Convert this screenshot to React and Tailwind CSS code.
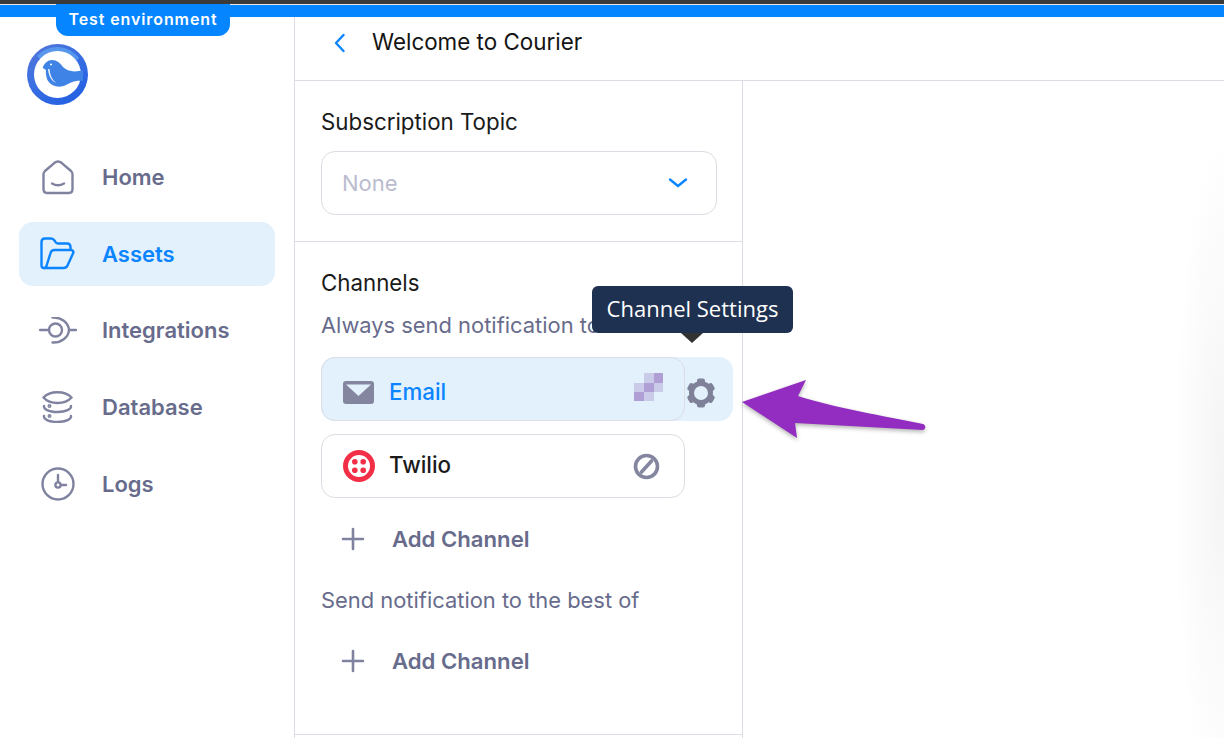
import React from "react";

const navIcon = "fill-none stroke-[#8083a0] stroke-[2.4]";

function HomeIcon() {
  return (
    <svg width="32" height="35" viewBox="0 0 32 35" className={navIcon} strokeLinecap="round" strokeLinejoin="round">
      <path d="M1.5 14 C1.5 12.8 2 12 3 11 L12.5 2.8 C14.5 1.2 17.5 1.2 19.5 2.8 L29 11 C30 12 30.5 12.8 30.5 14 V29 C30.5 31.5 29 33 27 33 H5 C3 33 1.5 31.5 1.5 29 Z" />
      <path d="M10 23.5 C13.5 25.5 18.5 25.5 22 23.5" />
    </svg>
  );
}

function FolderIcon() {
  return (
    <svg width="35" height="33" viewBox="0 0 35 33" className="fill-none stroke-[#0a84ff] stroke-[2.4]" strokeLinecap="round" strokeLinejoin="round">
      <path d="M4 31 C2.5 31 1.5 29.8 1.5 28.5 V5 C1.5 3 3 1.5 5 1.5 H11 C12.5 1.5 13.5 2 14.5 3.5 L15.5 5 C16 6 17 6.5 18 6.5 H27 C29 6.5 30.5 8 30.5 10 V12.5" />
      <path d="M4 31 C5.5 31 6 30 6.5 29 L10.5 16 C11 14 12.5 13 14.5 13 H31 C33 13 34 15 33 16.5 L27.5 28.5 C26.7 30.2 25.5 31 23.5 31 H4 Z" />
    </svg>
  );
}

function IntegrationsIcon() {
  return (
    <svg width="38" height="28" viewBox="0 0 38 28" className={navIcon} strokeLinecap="round">
      <path d="M1 13 H10" />
      <circle cx="16.5" cy="13" r="6.5" />
      <path d="M13.5 0.5 C22 0 29.5 5.5 30 13 C29.5 20.5 22 26 13.5 25.5" />
      <path d="M30 13 H37" />
    </svg>
  );
}

function DatabaseIcon() {
  return (
    <svg width="31" height="32" viewBox="0 0 31 32" className={navIcon} strokeLinecap="round">
      <path d="M1.5 6.5 C5 2.5 10 1.2 15.5 1.2 C21 1.2 26 2.5 29.5 6.5 C26 10.5 21 12 15.5 12 C10 12 5 10.5 1.5 6.5 Z" />
      <path d="M2 15 C1.5 18 6 20.8 15.5 21 C24 20.8 29.5 18 29 15" />
      <path d="M2 25 C1.5 28 6 30.8 15.5 31 C24 30.8 29.5 28 29 25" />
      <circle cx="7.5" cy="15" r="0.8" />
      <circle cx="7.5" cy="25" r="0.8" />
    </svg>
  );
}

function LogsIcon() {
  return (
    <svg width="34" height="34" viewBox="0 0 34 34" className={navIcon} strokeLinecap="round">
      <circle cx="17" cy="17" r="15.5" />
      <path d="M17 8 V15" />
      <circle cx="17" cy="18" r="2.6" />
      <path d="M20 18 H25" />
    </svg>
  );
}

function CourierLogo() {
  return (
    <svg width="61" height="61" viewBox="0 0 61 61">
      <defs>
        <linearGradient id="ring" x1="0" y1="0" x2="0.7" y2="1">
          <stop offset="0" stopColor="#5676d8" />
          <stop offset="0.5" stopColor="#3a6fe2" />
          <stop offset="1" stopColor="#2460e2" />
        </linearGradient>
      </defs>
      <circle cx="30.5" cy="30.5" r="30.5" fill="url(#ring)" />
      <path d="M10 12 A27 27 0 0 1 52 14 L47 19 A23 23 0 0 0 15 17 Z" fill="#5fa6f2" opacity="0.7" />
      <circle cx="30.5" cy="30.5" r="23.5" fill="#fff" />
      <path
        d="M15.7 24 C17 19 21 16 25 16 C30 16 33 19 36 23 C40 27 47 29 56 26 L56 37 C47 36 44 39 39 41 C33 44 25 43 21 37 C19 33 18.5 28 19 26 Z"
        fill="#3f83e6"
      />
      <path d="M21 25 C21.5 31 24 37 29 39 C25 35.5 23 31 22.5 25 Z" fill="#fff" opacity="0.9" />
      <circle cx="24" cy="20.5" r="1" fill="#fff" />
    </svg>
  );
}

function NavItem({ icon, label, active, lift }) {
  return (
    <div
      className={`flex h-16 items-center rounded-[14px] ${active ? "bg-[#e3f1fd] text-[#0a84ff]" : "text-[#686c8c]"}`}
    >
      <div className="flex w-[77px] shrink-0 justify-center">{icon}</div>
      <span className={`pl-[6px] text-[22px] leading-none font-semibold ${lift ? "pb-[2px]" : ""}`}>{label}</span>
    </div>
  );
}

function MailIcon() {
  return (
    <svg width="31" height="23" viewBox="0 0 31 23">
      <rect width="31" height="23" rx="3" fill="#8486a0" />
      <path d="M3 3.5 H28 L15.5 15 Z" fill="#e3f1fd" />
    </svg>
  );
}

function TwilioIcon() {
  return (
    <svg width="32" height="32" viewBox="0 0 32 32">
      <circle cx="16" cy="16" r="13.5" fill="none" stroke="#f22f46" strokeWidth="5" />
      <circle cx="11.8" cy="11.8" r="2.8" fill="#f22f46" />
      <circle cx="20.2" cy="11.8" r="2.8" fill="#f22f46" />
      <circle cx="11.8" cy="20.2" r="2.8" fill="#f22f46" />
      <circle cx="20.2" cy="20.2" r="2.8" fill="#f22f46" />
    </svg>
  );
}

function PixelSpinner() {
  const light = "#c9cbe9";
  const dark = "#b09fd5";
  return (
    <svg className="mb-1" width="29" height="28" viewBox="0 0 29 28" shapeRendering="crispEdges">
      <rect x="9.5" y="0" width="10" height="9.5" fill={light} />
      <rect x="19.5" y="0" width="9.5" height="9.5" fill={dark} />
      <rect x="0" y="9.5" width="9.5" height="9" fill={light} />
      <rect x="9.5" y="9.5" width="10" height="9" fill={dark} />
      <rect x="19.5" y="9.5" width="9.5" height="9" fill={light} />
      <rect x="0" y="18.5" width="9.5" height="9.5" fill={dark} />
      <rect x="9.5" y="18.5" width="10" height="9.5" fill={light} />
    </svg>
  );
}

function DisabledIcon() {
  return (
    <svg className="mr-1" width="27" height="27" viewBox="0 0 27 27" fill="none" stroke="#8486a0" strokeWidth="3.6">
      <circle cx="13.5" cy="13.5" r="11" />
      <path d="M8.5 19 L18.5 8" strokeLinecap="round" />
    </svg>
  );
}

function GearIcon() {
  return (
    <svg className="mt-2" width="30" height="30" viewBox="0 0 30 30">
      <circle cx="15" cy="15" r="12" fill="#7f8199" />
      {[0, 60, 120, 180, 240, 300].map((deg) => (
        <rect key={deg} x="11" y="0.6" width="8" height="6" rx="2" fill="#7f8199" transform={`rotate(${deg} 15 15)`} />
      ))}
      <circle cx="15" cy="15" r="7" fill="#e3f1fd" />
    </svg>
  );
}

function ChannelRow({ icon, label, right, active }) {
  return (
    <div
      className={`flex h-16 w-[364px] items-center rounded-[14px] border border-[#dcdce4] ${active ? "bg-[#e3f1fd] text-[#0a84ff]" : "bg-white text-[#1a1a1a]"}`}
    >
      <div className={`flex w-[67px] shrink-0 justify-center pl-[6px] ${active ? "pt-[7px]" : ""}`}>{icon}</div>
      <span className={`flex-1 text-[22.3px] leading-none font-medium ${active ? "pt-[6px]" : "pb-[2px]"}`}>{label}</span>
      <div className="flex w-[72px] shrink-0 justify-center">{right}</div>
    </div>
  );
}

function AddChannel() {
  return (
    <div className="flex h-10 items-center text-[#686c8c]">
      <div className="flex w-[71px] shrink-0 justify-center pr-[7px]">
        <svg width="24" height="24" viewBox="0 0 24 24" fill="none" stroke="#8083a0" strokeWidth="2.6" strokeLinecap="round">
          <path d="M12 2 V22 M2 12 H22" />
        </svg>
      </div>
      <span className="text-[22.15px] leading-none font-semibold">Add Channel</span>
    </div>
  );
}

export default function App() {
  return (
    <div className="relative flex h-[738px] w-[1224px] flex-col overflow-hidden bg-white font-['Inter',sans-serif]">
      <div className="h-[5px] shrink-0 border-b border-[#e8e8e8] bg-[#3a3a3a]" />
      <div className="h-3 shrink-0 bg-[#0585ff]" />

      {/* test badge */}
      <div className="absolute top-1 left-14 flex h-8 w-[174px] items-center justify-center rounded-b-xl bg-[#0585ff] pb-[2px] text-[16px] font-semibold tracking-[0.9px] text-white">
        Test environment
      </div>

      <div className="flex min-h-0 flex-1">
        {/* sidebar */}
        <aside className="w-[295px] shrink-0 border-r border-[#dcdce4] pr-[19px] pl-[19px]">
          <div className="pt-[27px] pl-2">
            <CourierLogo />
          </div>
          <nav className="mt-[40px] flex flex-col gap-[12.75px]">
            <NavItem icon={<HomeIcon />} label="Home" />
            <NavItem icon={<FolderIcon />} label="Assets" active />
            <NavItem icon={<IntegrationsIcon />} label="Integrations" lift />
            <NavItem icon={<DatabaseIcon />} label="Database" />
            <NavItem icon={<LogsIcon />} label="Logs" />
          </nav>
        </aside>

        <main className="flex min-w-0 flex-1 flex-col">
          <header className="flex h-[64px] shrink-0 items-center border-b border-[#dcdce4] pb-3">
            <svg className="mr-[25px] ml-[38px]" width="14" height="20" viewBox="0 0 14 20" fill="none" stroke="#0a84ff" strokeWidth="2.4" strokeLinecap="round" strokeLinejoin="round">
              <path d="M10.5 2 L3 10 L10.5 18" />
            </svg>
            <h1 className="text-[22.4px] leading-none font-normal text-[#141414]">Welcome to Courier</h1>
          </header>

          <div className="flex w-[448px] min-h-0 flex-1 flex-col border-r border-[#dcdce4]">
            <section className="h-[161px] shrink-0 border-b border-[#dcdce4] px-[26px] pt-[27px]">
              <div className="text-[22.3px] leading-[28px] text-[#1a1a1a]">Subscription Topic</div>
              <div className="mt-[15px] flex h-16 w-[396px] items-center justify-between rounded-[14px] border border-[#dcdce4] pr-[27px] pl-5">
                <span className="text-[22px] leading-none text-[#babcd0]">None</span>
                <svg width="22" height="14" viewBox="0 0 22 14" fill="none" stroke="#0a84ff" strokeWidth="2.4" strokeLinecap="round" strokeLinejoin="round">
                  <path d="M3 3.5 L11 10 L19 3.5" />
                </svg>
              </div>
            </section>

            <section className="h-[493px] shrink-0 border-b border-[#dcdce4] pt-[27px] pl-[26px]">
              <div className="text-[22.3px] leading-[28px] text-[#1a1a1a]">Channels</div>
              <div className="mt-[14px] text-[21.9px] leading-[28px] text-[#686c8c]">Always send notification to</div>

              <div className="mt-[18px] flex w-[412px] items-center rounded-[14px] bg-[#e3f1fd]">
                <ChannelRow icon={<MailIcon />} label="Email" right={<PixelSpinner />} active />
                <div className="flex w-[32px] justify-center">
                  <GearIcon />
                </div>
              </div>

              <div className="mt-[13px]">
                <ChannelRow icon={<TwilioIcon />} label="Twilio" right={<DisabledIcon />} />
              </div>

              <div className="mt-[21px]">
                <AddChannel />
              </div>
              <div className="mt-[27px] text-[21.9px] leading-[28px] text-[#686c8c]">Send notification to the best of</div>
              <div className="mt-[27px]">
                <AddChannel />
              </div>
            </section>
          </div>
        </main>
      </div>

      {/* tooltip */}
      <div className="absolute top-[286px] left-[592px] flex h-[47px] w-[201px] items-center justify-center rounded-md bg-[#1f3150] pb-1 font-['Open_Sans',sans-serif] text-[22px] leading-none text-white">
        Channel Settings
      </div>
      <div className="absolute top-[333px] left-[681px] h-0 w-0 border-x-[11px] border-t-[10px] border-x-transparent border-t-[#333333]" />

      {/* annotation arrow */}
      <svg className="absolute top-[370px] left-[735px] drop-shadow-[0_2px_2px_rgba(0,0,0,0.3)]" width="200" height="75" viewBox="0 0 200 75">
        <path
          d="M7 32 L71 10 L63 26 C100 38 150 46 188 54 C191 55 191 59 188 60 L60 53 L62 68 Z"
          fill="#932cc0"
        />
      </svg>

      {/* faint window shade on the right edge */}
      <div className="absolute top-[80px] right-0 bottom-0 w-[60px] bg-[radial-gradient(ellipse_50px_340px_at_100%_60%,#f4f4f4,transparent)]" />
    </div>
  );
}
